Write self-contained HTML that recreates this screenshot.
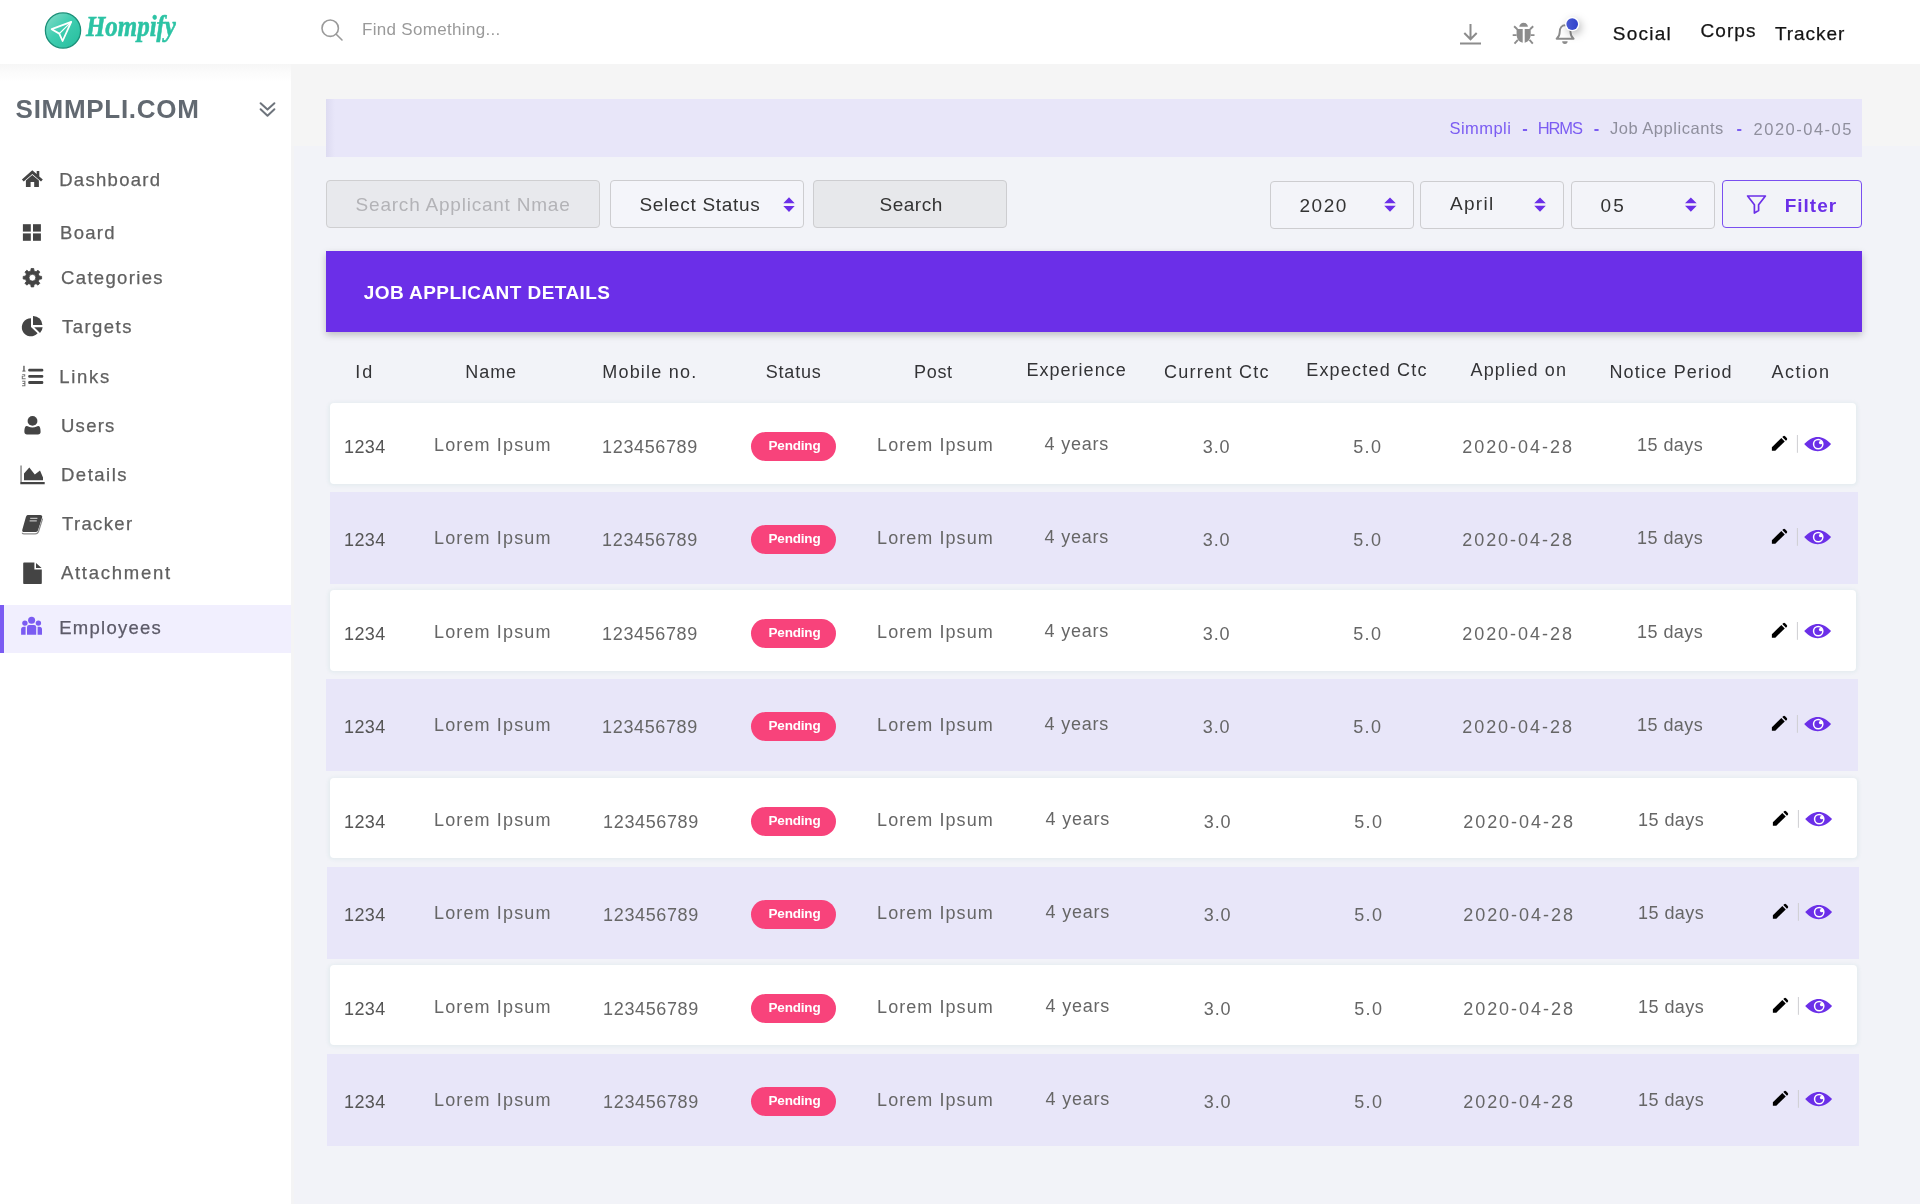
<!DOCTYPE html>
<html lang="en">
<head>
<meta charset="utf-8">
<title>Job Applicants - Simmpli HRMS</title>
<style>
html,body{margin:0;padding:0;}
body{width:1920px;height:1204px;overflow:hidden;position:relative;background:#f2f3f8;font-family:"Liberation Sans", sans-serif;}
.b{position:absolute;}
.tx{position:absolute;left:0;top:0;width:1920px;height:1204px;z-index:10;will-change:transform;pointer-events:none;}
.t{position:absolute;white-space:pre;}
svg.ic{position:absolute;left:0;top:0;width:1920px;height:1204px;z-index:9;pointer-events:none;}
</style>
</head>
<body>
<header>
<div class="b" style="left:0px;top:0px;width:1920px;height:64px;background:#ffffff;"></div>
<svg class="ic" viewBox="0 0 1920 1204">
<defs><linearGradient id="lg" x1="0" y1="0" x2="1" y2="1"><stop offset="0" stop-color="#8adcc9"/><stop offset="0.45" stop-color="#3fcdb0"/><stop offset="1" stop-color="#25bd9d"/></linearGradient></defs>
<circle cx="63" cy="30.5" r="17.6" fill="url(#lg)" stroke="#1b8f78" stroke-width="1.3"/>
<path d="M71.2 21.9 L51.7 29.2 L59.3 33.6 L62.6 41 Z" fill="none" stroke="#ffffff" stroke-width="1.8" stroke-linejoin="round"/>
<path d="M71.2 21.9 L59.3 33.6" fill="none" stroke="#ffffff" stroke-width="1.3"/>
<circle cx="330.2" cy="28.2" r="8.2" fill="none" stroke="#9a9a9a" stroke-width="1.6"/><path d="M336.2 34.3 L342 40" stroke="#9a9a9a" stroke-width="1.6" stroke-linecap="round"/>
<path d="M1470.5 24 V39 M1464.3 33 L1470.5 39.3 L1476.7 33 M1460 43.4 H1481" fill="none" stroke="#8c8c8c" stroke-width="2"/>
<g fill="#8c8c8c" stroke="#8c8c8c">
<path d="M1519.3 26.8 a4.3 4.1 0 0 1 8.6 0 z" stroke="none"/>
<path d="M1516.6 28.9 h6.1 v13.9 c-3.6 -0.6 -6.1 -4 -6.1 -8.2 z M1524.7 28.9 h6 v5.7 c0 4.2 -2.5 7.6 -6 8.2 z" stroke="none"/>
<path d="M1516.6 35.1 H1512.7 M1530.7 35.1 H1534.5 M1517.3 29.3 L1514.1 26.3 M1530.1 29.3 L1533.2 26.3 M1517.9 39.9 L1514.5 43.7 M1529.5 39.9 L1532.8 43.7" fill="none" stroke-width="1.9"/>
</g>
<path d="M1556.6 38.7 h17 c-2.3 -1.7 -3.1 -3.4 -3.1 -6.7 c0 -4 -2.2 -6.7 -5.4 -6.7 c-3.2 0 -5.4 2.7 -5.4 6.7 c0 3.3 -0.8 5 -3.1 6.7 z" fill="none" stroke="#8c8c8c" stroke-width="1.9" stroke-linejoin="round"/><path d="M1562.2 41.3 a2.7 2.7 0 0 0 5.4 0 z" fill="#8c8c8c"/>
<defs><linearGradient id="dg" x1="0" y1="0" x2="1" y2="0"><stop offset="0" stop-color="#4a5bd2"/><stop offset="1" stop-color="#3142cc"/></linearGradient></defs><circle cx="1572.2" cy="24.1" r="7.2" fill="#ffffff" style="filter:drop-shadow(2px 3px 4px rgba(0,0,0,0.28))"/><circle cx="1572.2" cy="24.1" r="5.85" fill="url(#dg)"/>
</svg>
<div class="tx">
<span class="t" style="left:86.3px;top:8.3px;font:italic 700 29.5px/36px 'Liberation Serif', serif;color:#2cc3a4;-webkit-text-stroke:0.6px #2cc3a4;transform:scaleX(0.844);transform-origin:0 0;">Hompify</span>
<span class="t" style="left:362.0px;top:18.6px;font:normal 400 17px/21px 'Liberation Sans', sans-serif;color:#9a9a9a;letter-spacing:0.31px;">Find Something...</span>
<span class="t" style="left:1612.8px;top:21.7px;font:normal 400 19px/23px 'Liberation Sans', sans-serif;color:#141414;letter-spacing:1.22px;-webkit-text-stroke:0.25px;">Social</span>
<span class="t" style="left:1700.6px;top:19.4px;font:normal 400 19px/23px 'Liberation Sans', sans-serif;color:#141414;letter-spacing:1.05px;-webkit-text-stroke:0.25px;">Corps</span>
<span class="t" style="left:1775.0px;top:21.9px;font:normal 400 19px/23px 'Liberation Sans', sans-serif;color:#141414;letter-spacing:0.94px;-webkit-text-stroke:0.25px;">Tracker</span>
</div>
</header>
<aside>
<div class="b" style="left:0px;top:64px;width:291px;height:1140px;background:#ffffff;"></div>
<div class="b" style="left:0px;top:64px;width:291px;height:18px;background:linear-gradient(#f6f6f6,#fbfbfb 45%,#ffffff);"></div>
<div class="b" style="left:0px;top:605px;width:291px;height:48px;background:#f1effe;border-left:4px solid #7b5cf2;box-sizing:border-box;"></div>
<svg class="ic" viewBox="0 0 1920 1204">
<path d="M260.6 103.2 L267.5 109.6 L274.4 103.2 M260.6 109.3 L267.5 115.7 L274.4 109.3" fill="none" stroke="#6e747c" stroke-width="2" stroke-linecap="round" stroke-linejoin="round"/>
<g fill="#444444"><path d="M21.9 179.4 L32.3 170.3 L36.7 174.1 V171 H39.3 V176.4 L42.8 179.4 L41.0 181.5 L32.3 174 L23.7 181.5 Z"/><path d="M25.9 180.5 L32.3 175.0 L38.9 180.5 V187.1 H34.2 V182 H30.6 V187.1 H25.9 Z"/></g>
<g fill="#444444"><rect x="22.9" y="224.2" width="7.9" height="7.4"/><rect x="33" y="224.2" width="7.9" height="7.4"/><rect x="22.9" y="233.4" width="7.9" height="7.4"/><rect x="33" y="233.4" width="7.9" height="7.4"/></g>
<path d="M31.09 268.49 L33.71 268.49 L34.03 270.89 L36.06 271.73 L37.98 270.26 L39.84 272.12 L38.37 274.04 L39.21 276.07 L41.61 276.39 L41.61 279.01 L39.21 279.33 L38.37 281.36 L39.84 283.28 L37.98 285.14 L36.06 283.67 L34.03 284.51 L33.71 286.91 L31.09 286.91 L30.77 284.51 L28.74 283.67 L26.82 285.14 L24.96 283.28 L26.43 281.36 L25.59 279.33 L23.19 279.01 L23.19 276.39 L25.59 276.07 L26.43 274.04 L24.96 272.12 L26.82 270.26 L28.74 271.73 L30.77 270.89 Z M29.00 277.70 a3.4 3.4 0 1 0 6.8 0 a3.4 3.4 0 1 0 -6.8 0 Z" fill="#444444" fill-rule="evenodd" stroke="#444444" stroke-width="0.8" stroke-linejoin="round"/>
<g fill="#444444"><path d="M31 318.3 V327 L37.6 333.2 A9 9 0 1 1 31 318.3 Z"/><path d="M33 316 A9.2 9.2 0 0 1 42.4 325 H33 Z"/><path d="M34.2 327.2 H42.6 A9.4 9.4 0 0 1 40 333 Z"/></g>
<g fill="#444444"><rect x="28.2" y="368.7" width="15.1" height="2.8" rx="1.2"/><rect x="28.2" y="374.9" width="15.1" height="2.8" rx="1.2"/><rect x="28.2" y="381.1" width="15.1" height="2.8" rx="1.2"/><rect x="23.2" y="365.8" width="1.5" height="5.4" opacity="0.8"/><rect x="22.2" y="370.6" width="3.4" height="1" opacity="0.7"/><path d="M22.2 374.2 h3 v2.4 h-2.4 v1.6 h2.8 v1 h-3.8 v-3.4 h2.4 v-0.8 h-2 z" opacity="0.75"/><path d="M22.2 380.8 h3.2 v5.4 h-3.4 v-1 h2.3 v-1.3 h-1.7 v-0.9 h1.7 v-1.2 h-2.1 z" opacity="0.75"/></g>
<g fill="#444444"><circle cx="32.5" cy="420.9" r="4.9"/><path d="M26.6 426 c1.6 0 2.6 1.6 5.9 1.6 s4.3 -1.6 5.9 -1.6 c1.8 0 2.2 3.4 2.2 6 c0 1.6 -1 2.5 -2.6 2.5 h-11 c-1.6 0 -2.6 -0.9 -2.6 -2.5 c0 -2.6 0.4 -6 2.2 -6 z"/></g>
<g fill="#444444"><path d="M20.3 465.5 h1.5 v16.6 h-1.5 z" fill="#8c8c8c"/><path d="M20.3 482.1 h24.4 v2.1 h-24.4 z"/><path d="M24 480.3 V473.6 L29.3 467.4 L34.8 474.6 L40 470.4 L43 477.5 V480.3 Z"/></g>
<g><path d="M27.6 514.9 h12.6 c1.6 0 2.4 1 1.9 2.6 l-4 12.4 c-0.4 1.3 -1.4 2.2 -3 2.2 h-11 c-1.5 0 -2.2 -1 -1.8 -2.4 l3.6 -12.6 c0.4 -1.4 1.2 -2.2 1.7 -2.2 z" fill="#444444"/><path d="M42.6 518.6 l-4 12.6 c-0.5 1.6 -1.7 2.6 -3.4 2.6 h-11.4 c-1 0 -1.6 -0.4 -1.6 -1" fill="none" stroke="#8a8a8a" stroke-width="1.2"/><path d="M30.2 518.4 h7.2 M29.6 520.8 h7.2" stroke="#bdbdbd" stroke-width="1.3"/></g>
<path d="M24 562.6 h10.4 v6.9 h7.4 v13.8 a0.8 0.8 0 0 1 -0.8 0.8 h-17 a0.8 0.8 0 0 1 -0.8 -0.8 v-19.9 a0.8 0.8 0 0 1 0.8 -0.8 z M36 562.9 l5.6 5.2 h-5.6 z" fill="#444444"/>
<g fill="#7b5cf2"><circle cx="31.6" cy="620.3" r="3.5"/><path d="M27 634.8 v-7.6 a2.2 2.2 0 0 1 2.2 -2.2 h4.8 a2.2 2.2 0 0 1 2.2 2.2 v7.6 z"/><circle cx="24.9" cy="623.1" r="2.7"/><path d="M21.1 634.8 v-5.4 a2.7 2.7 0 0 1 2.7 -2.7 h1.8 v8.1 z"/><circle cx="38.4" cy="623.1" r="2.7"/><path d="M42 634.8 v-5.4 a2.7 2.7 0 0 0 -2.7 -2.7 h-1.7 v8.1 z"/></g>
</svg>
<div class="tx">
<span class="t" style="left:15.6px;top:93.3px;font:normal 700 26px/32px 'Liberation Sans', sans-serif;color:#626971;letter-spacing:0.7px;">SIMMPLI.COM</span>
<span class="t" style="left:59.2px;top:167.9px;font:normal 400 18.5px/23px 'Liberation Sans', sans-serif;color:#606060;letter-spacing:1.3px;-webkit-text-stroke:0.25px;">Dashboard</span>
<span class="t" style="left:60.1px;top:220.8px;font:normal 400 18.5px/23px 'Liberation Sans', sans-serif;color:#606060;letter-spacing:1.28px;-webkit-text-stroke:0.25px;">Board</span>
<span class="t" style="left:61.1px;top:265.7px;font:normal 400 18.5px/23px 'Liberation Sans', sans-serif;color:#606060;letter-spacing:1.33px;-webkit-text-stroke:0.25px;">Categories</span>
<span class="t" style="left:62.0px;top:314.9px;font:normal 400 18.5px/23px 'Liberation Sans', sans-serif;color:#606060;letter-spacing:1.46px;-webkit-text-stroke:0.25px;">Targets</span>
<span class="t" style="left:59.2px;top:364.9px;font:normal 400 18.5px/23px 'Liberation Sans', sans-serif;color:#606060;letter-spacing:1.69px;-webkit-text-stroke:0.25px;">Links</span>
<span class="t" style="left:61.0px;top:413.7px;font:normal 400 18.5px/23px 'Liberation Sans', sans-serif;color:#606060;letter-spacing:1.26px;-webkit-text-stroke:0.25px;">Users</span>
<span class="t" style="left:61.0px;top:463.1px;font:normal 400 18.5px/23px 'Liberation Sans', sans-serif;color:#606060;letter-spacing:1.49px;-webkit-text-stroke:0.25px;">Details</span>
<span class="t" style="left:62.0px;top:512.0px;font:normal 400 18.5px/23px 'Liberation Sans', sans-serif;color:#606060;letter-spacing:1.34px;-webkit-text-stroke:0.25px;">Tracker</span>
<span class="t" style="left:60.9px;top:561.0px;font:normal 400 18.5px/23px 'Liberation Sans', sans-serif;color:#606060;letter-spacing:1.74px;-webkit-text-stroke:0.25px;">Attachment</span>
<span class="t" style="left:59.2px;top:615.7px;font:normal 400 18.5px/23px 'Liberation Sans', sans-serif;color:#5c5a68;letter-spacing:1.27px;-webkit-text-stroke:0.25px;">Employees</span>
</div>
</aside>
<main>
<div class="b" style="left:291px;top:64px;width:1629px;height:82px;background:#f5f5f5;"></div>
<div class="b" style="left:291px;top:146px;width:3px;height:1058px;background:#f4f4f5;"></div>
<div class="b" style="left:326px;top:99px;width:1536px;height:58px;background:linear-gradient(90deg,#dddbf1 0,#e8e6f9 9px);"></div>
<div class="b" style="left:326px;top:180px;width:274px;height:47.5px;background:#e8e9ed;border:1px solid #cfcfd1;border-radius:4px;box-sizing:border-box;"></div>
<div class="b" style="left:610px;top:180px;width:194px;height:47.5px;background:#f4f5fa;border:1px solid #cdcdd0;border-radius:4px;box-sizing:border-box;"></div>
<div class="b" style="left:813px;top:180px;width:194px;height:47.5px;background:#e7e8eb;border:1px solid #cdcdd0;border-radius:4px;box-sizing:border-box;"></div>
<div class="b" style="left:1270px;top:181px;width:144px;height:48px;background:#f3f4f9;border:1px solid #cdcdd0;border-radius:4px;box-sizing:border-box;"></div>
<div class="b" style="left:1420px;top:181px;width:144px;height:48px;background:#f3f4f9;border:1px solid #cdcdd0;border-radius:4px;box-sizing:border-box;"></div>
<div class="b" style="left:1571px;top:181px;width:144px;height:48px;background:#f3f4f9;border:1px solid #cdcdd0;border-radius:4px;box-sizing:border-box;"></div>
<div class="b" style="left:1722px;top:180px;width:140px;height:48px;border:1px solid #7a4ff0;border-radius:4px;box-sizing:border-box;"></div>
<div class="b" style="left:326px;top:251px;width:1536px;height:81px;background:#6b2fe8;box-shadow:0 3px 7px rgba(0,0,0,0.22);"></div>
<div class="b" style="left:329.7px;top:403px;width:1526.1px;height:80.8px;background:#ffffff;border-radius:4px;box-shadow:0 0.5px 3px 1.5px rgba(214,228,230,0.42);"></div>
<div class="b" style="left:330px;top:492px;width:1528px;height:92px;background:#e8e6f9;"></div>
<div class="b" style="left:329.7px;top:590px;width:1526.1px;height:80.8px;background:#ffffff;border-radius:4px;box-shadow:0 0.5px 3px 1.5px rgba(214,228,230,0.42);"></div>
<div class="b" style="left:326px;top:679px;width:1532px;height:91.5px;background:#e8e6f9;"></div>
<div class="b" style="left:330.4px;top:777.8px;width:1526.4px;height:80.2px;background:#ffffff;border-radius:4px;box-shadow:0 0.5px 3px 1.5px rgba(214,228,230,0.42);"></div>
<div class="b" style="left:327px;top:867px;width:1532px;height:92px;background:#e8e6f9;"></div>
<div class="b" style="left:330.4px;top:965.3px;width:1526.4px;height:79.9px;background:#ffffff;border-radius:4px;box-shadow:0 0.5px 3px 1.5px rgba(214,228,230,0.42);"></div>
<div class="b" style="left:327px;top:1054px;width:1532px;height:92px;background:#e8e6f9;"></div>
<div class="b" style="left:751.25px;top:432.4px;width:84.65px;height:28.5px;background:#f8437b;border-radius:14.5px;"></div>
<div class="b" style="left:751.25px;top:525.4px;width:84.65px;height:28.5px;background:#f8437b;border-radius:14.5px;"></div>
<div class="b" style="left:751.25px;top:619.4px;width:84.65px;height:28.5px;background:#f8437b;border-radius:14.5px;"></div>
<div class="b" style="left:751.25px;top:712.4px;width:84.65px;height:28.5px;background:#f8437b;border-radius:14.5px;"></div>
<div class="b" style="left:751.25px;top:807.4px;width:84.65px;height:28.5px;background:#f8437b;border-radius:14.5px;"></div>
<div class="b" style="left:751.25px;top:900.4px;width:84.65px;height:28.5px;background:#f8437b;border-radius:14.5px;"></div>
<div class="b" style="left:751.25px;top:994.4px;width:84.65px;height:28.5px;background:#f8437b;border-radius:14.5px;"></div>
<div class="b" style="left:751.25px;top:1087.4px;width:84.65px;height:28.5px;background:#f8437b;border-radius:14.5px;"></div>
<svg class="ic" viewBox="0 0 1920 1204">
<path d="M783.3 203.3 L789.0 197.3 L794.7 203.3 Z M783.3 206 L789.0 212 L794.7 206 Z" fill="#6b2fe8"/>
<path d="M1384.2 203.3 L1390.0 197.5 L1395.8 203.3 Z M1384.2 205.8 L1390.0 211.7 L1395.8 205.8 Z" fill="#6b2fe8"/>
<path d="M1534.2 203.3 L1540.0 197.5 L1545.8 203.3 Z M1534.2 205.8 L1540.0 211.7 L1545.8 205.8 Z" fill="#6b2fe8"/>
<path d="M1685 203.3 L1690.85 197.5 L1696.7 203.3 Z M1685 205.8 L1690.85 211.7 L1696.7 205.8 Z" fill="#6b2fe8"/>
<path d="M1747.6 196 H1765.4 L1758.6 204.8 V210.6 L1754.4 213 V204.8 Z" fill="none" stroke="#6b2fe8" stroke-width="1.7" stroke-linejoin="round"/>
<g transform="translate(0,0)"><path d="M1771.9 447.3 L1781.35 438.0 L1784.75 441.4 L1775.3 450.75 H1771.9 Z" fill="#000"/><path d="M1782.3 437.1 L1783.1 436.3 a1.45 1.45 0 0 1 2.05 0 l1.6 1.6 a1.45 1.45 0 0 1 0 2.05 l-0.8 0.8 Z" fill="#000"/></g>
<rect x="1796.9" y="435" width="1" height="17.8" fill="#cfcfd2"/>
<g><path d="M1804.2 444.1 C1808.7 438.90000000000003 1813.2 436.90000000000003 1817.7 436.90000000000003 C1822.2 436.90000000000003 1826.7 438.90000000000003 1831.1000000000001 444.1 C1826.7 449.3 1822.2 451.20000000000005 1817.7 451.20000000000005 C1813.2 451.20000000000005 1808.7 449.3 1804.2 444.1 Z" fill="#6b2fe8"/><circle cx="1818.2" cy="444.1" r="5.4" fill="#fff"/><circle cx="1818.2" cy="444.1" r="3.9" fill="#6b2fe8"/><circle cx="1820.8" cy="442.5" r="1.85" fill="#fff"/></g>
<g transform="translate(0,93)"><path d="M1771.9 447.3 L1781.35 438.0 L1784.75 441.4 L1775.3 450.75 H1771.9 Z" fill="#000"/><path d="M1782.3 437.1 L1783.1 436.3 a1.45 1.45 0 0 1 2.05 0 l1.6 1.6 a1.45 1.45 0 0 1 0 2.05 l-0.8 0.8 Z" fill="#000"/></g>
<rect x="1796.9" y="528" width="1" height="17.8" fill="#cfcfd2"/>
<g><path d="M1804.2 537.1 C1808.7 531.9 1813.2 529.9 1817.7 529.9 C1822.2 529.9 1826.7 531.9 1831.1000000000001 537.1 C1826.7 542.3000000000001 1822.2 544.2 1817.7 544.2 C1813.2 544.2 1808.7 542.3000000000001 1804.2 537.1 Z" fill="#6b2fe8"/><circle cx="1818.2" cy="537.1" r="5.4" fill="#fff"/><circle cx="1818.2" cy="537.1" r="3.9" fill="#6b2fe8"/><circle cx="1820.8" cy="535.5" r="1.85" fill="#fff"/></g>
<g transform="translate(0,187)"><path d="M1771.9 447.3 L1781.35 438.0 L1784.75 441.4 L1775.3 450.75 H1771.9 Z" fill="#000"/><path d="M1782.3 437.1 L1783.1 436.3 a1.45 1.45 0 0 1 2.05 0 l1.6 1.6 a1.45 1.45 0 0 1 0 2.05 l-0.8 0.8 Z" fill="#000"/></g>
<rect x="1796.9" y="622" width="1" height="17.8" fill="#cfcfd2"/>
<g><path d="M1804.2 631.1 C1808.7 625.9 1813.2 623.9 1817.7 623.9 C1822.2 623.9 1826.7 625.9 1831.1000000000001 631.1 C1826.7 636.3000000000001 1822.2 638.2 1817.7 638.2 C1813.2 638.2 1808.7 636.3000000000001 1804.2 631.1 Z" fill="#6b2fe8"/><circle cx="1818.2" cy="631.1" r="5.4" fill="#fff"/><circle cx="1818.2" cy="631.1" r="3.9" fill="#6b2fe8"/><circle cx="1820.8" cy="629.5" r="1.85" fill="#fff"/></g>
<g transform="translate(0,280)"><path d="M1771.9 447.3 L1781.35 438.0 L1784.75 441.4 L1775.3 450.75 H1771.9 Z" fill="#000"/><path d="M1782.3 437.1 L1783.1 436.3 a1.45 1.45 0 0 1 2.05 0 l1.6 1.6 a1.45 1.45 0 0 1 0 2.05 l-0.8 0.8 Z" fill="#000"/></g>
<rect x="1796.9" y="715" width="1" height="17.8" fill="#cfcfd2"/>
<g><path d="M1804.2 724.1 C1808.7 718.9 1813.2 716.9 1817.7 716.9 C1822.2 716.9 1826.7 718.9 1831.1000000000001 724.1 C1826.7 729.3000000000001 1822.2 731.2 1817.7 731.2 C1813.2 731.2 1808.7 729.3000000000001 1804.2 724.1 Z" fill="#6b2fe8"/><circle cx="1818.2" cy="724.1" r="5.4" fill="#fff"/><circle cx="1818.2" cy="724.1" r="3.9" fill="#6b2fe8"/><circle cx="1820.8" cy="722.5" r="1.85" fill="#fff"/></g>
<g transform="translate(1,375)"><path d="M1771.9 447.3 L1781.35 438.0 L1784.75 441.4 L1775.3 450.75 H1771.9 Z" fill="#000"/><path d="M1782.3 437.1 L1783.1 436.3 a1.45 1.45 0 0 1 2.05 0 l1.6 1.6 a1.45 1.45 0 0 1 0 2.05 l-0.8 0.8 Z" fill="#000"/></g>
<rect x="1797.9" y="810" width="1" height="17.8" fill="#cfcfd2"/>
<g><path d="M1805.2 819.1 C1809.7 813.9 1814.2 811.9 1818.7 811.9 C1823.2 811.9 1827.7 813.9 1832.1000000000001 819.1 C1827.7 824.3000000000001 1823.2 826.2 1818.7 826.2 C1814.2 826.2 1809.7 824.3000000000001 1805.2 819.1 Z" fill="#6b2fe8"/><circle cx="1819.2" cy="819.1" r="5.4" fill="#fff"/><circle cx="1819.2" cy="819.1" r="3.9" fill="#6b2fe8"/><circle cx="1821.8" cy="817.5" r="1.85" fill="#fff"/></g>
<g transform="translate(1,468)"><path d="M1771.9 447.3 L1781.35 438.0 L1784.75 441.4 L1775.3 450.75 H1771.9 Z" fill="#000"/><path d="M1782.3 437.1 L1783.1 436.3 a1.45 1.45 0 0 1 2.05 0 l1.6 1.6 a1.45 1.45 0 0 1 0 2.05 l-0.8 0.8 Z" fill="#000"/></g>
<rect x="1797.9" y="903" width="1" height="17.8" fill="#cfcfd2"/>
<g><path d="M1805.2 912.1 C1809.7 906.9 1814.2 904.9 1818.7 904.9 C1823.2 904.9 1827.7 906.9 1832.1000000000001 912.1 C1827.7 917.3000000000001 1823.2 919.2 1818.7 919.2 C1814.2 919.2 1809.7 917.3000000000001 1805.2 912.1 Z" fill="#6b2fe8"/><circle cx="1819.2" cy="912.1" r="5.4" fill="#fff"/><circle cx="1819.2" cy="912.1" r="3.9" fill="#6b2fe8"/><circle cx="1821.8" cy="910.5" r="1.85" fill="#fff"/></g>
<g transform="translate(1,562)"><path d="M1771.9 447.3 L1781.35 438.0 L1784.75 441.4 L1775.3 450.75 H1771.9 Z" fill="#000"/><path d="M1782.3 437.1 L1783.1 436.3 a1.45 1.45 0 0 1 2.05 0 l1.6 1.6 a1.45 1.45 0 0 1 0 2.05 l-0.8 0.8 Z" fill="#000"/></g>
<rect x="1797.9" y="997" width="1" height="17.8" fill="#cfcfd2"/>
<g><path d="M1805.2 1006.1 C1809.7 1000.9 1814.2 998.9 1818.7 998.9 C1823.2 998.9 1827.7 1000.9 1832.1000000000001 1006.1 C1827.7 1011.3000000000001 1823.2 1013.2 1818.7 1013.2 C1814.2 1013.2 1809.7 1011.3000000000001 1805.2 1006.1 Z" fill="#6b2fe8"/><circle cx="1819.2" cy="1006.1" r="5.4" fill="#fff"/><circle cx="1819.2" cy="1006.1" r="3.9" fill="#6b2fe8"/><circle cx="1821.8" cy="1004.5" r="1.85" fill="#fff"/></g>
<g transform="translate(1,655)"><path d="M1771.9 447.3 L1781.35 438.0 L1784.75 441.4 L1775.3 450.75 H1771.9 Z" fill="#000"/><path d="M1782.3 437.1 L1783.1 436.3 a1.45 1.45 0 0 1 2.05 0 l1.6 1.6 a1.45 1.45 0 0 1 0 2.05 l-0.8 0.8 Z" fill="#000"/></g>
<rect x="1797.9" y="1090" width="1" height="17.8" fill="#cfcfd2"/>
<g><path d="M1805.2 1099.1 C1809.7 1093.8999999999999 1814.2 1091.8999999999999 1818.7 1091.8999999999999 C1823.2 1091.8999999999999 1827.7 1093.8999999999999 1832.1000000000001 1099.1 C1827.7 1104.3 1823.2 1106.1999999999998 1818.7 1106.1999999999998 C1814.2 1106.1999999999998 1809.7 1104.3 1805.2 1099.1 Z" fill="#6b2fe8"/><circle cx="1819.2" cy="1099.1" r="5.4" fill="#fff"/><circle cx="1819.2" cy="1099.1" r="3.9" fill="#6b2fe8"/><circle cx="1821.8" cy="1097.5" r="1.85" fill="#fff"/></g>
</svg>
<div class="tx">
<span class="t" style="left:1449.5px;top:117.5px;font:normal 400 16.5px/20px 'Liberation Sans', sans-serif;color:#7b5cf2;letter-spacing:0.45px;">Simmpli</span>
<span class="t" style="left:1522.3px;top:117.5px;font:normal 700 16.5px/20px 'Liberation Sans', sans-serif;color:#7b5cf2;">-</span>
<span class="t" style="left:1537.8px;top:117.5px;font:normal 400 16.5px/20px 'Liberation Sans', sans-serif;color:#7b5cf2;letter-spacing:-1.13px;">HRMS</span>
<span class="t" style="left:1593.8px;top:117.5px;font:normal 700 16.5px/20px 'Liberation Sans', sans-serif;color:#7b5cf2;">-</span>
<span class="t" style="left:1609.9px;top:117.5px;font:normal 400 16.5px/20px 'Liberation Sans', sans-serif;color:#8f8f9d;letter-spacing:0.54px;">Job Applicants</span>
<span class="t" style="left:1736.6px;top:117.5px;font:normal 700 16.5px/20px 'Liberation Sans', sans-serif;color:#7b5cf2;">-</span>
<span class="t" style="left:1753.6px;top:118.7px;font:normal 400 16.5px/20px 'Liberation Sans', sans-serif;color:#8f8f9d;letter-spacing:1.49px;">2020-04-05</span>
<span class="t" style="left:355.6px;top:192.8px;font:normal 400 19px/23px 'Liberation Sans', sans-serif;color:#b3b3b7;letter-spacing:0.78px;">Search Applicant Nmae</span>
<span class="t" style="left:639.4px;top:192.8px;font:normal 400 19px/23px 'Liberation Sans', sans-serif;color:#333333;letter-spacing:0.7px;">Select Status</span>
<span class="t" style="left:879.6px;top:192.8px;font:normal 400 19px/23px 'Liberation Sans', sans-serif;color:#333333;letter-spacing:0.49px;">Search</span>
<span class="t" style="left:1299.5px;top:193.9px;font:normal 400 19px/23px 'Liberation Sans', sans-serif;color:#333333;letter-spacing:1.53px;">2020</span>
<span class="t" style="left:1450.0px;top:192.2px;font:normal 400 19px/23px 'Liberation Sans', sans-serif;color:#333333;letter-spacing:1.3px;">April</span>
<span class="t" style="left:1600.5px;top:193.9px;font:normal 400 19px/23px 'Liberation Sans', sans-serif;color:#333333;letter-spacing:2.23px;">05</span>
<span class="t" style="left:1784.8px;top:193.9px;font:normal 700 19px/23px 'Liberation Sans', sans-serif;color:#6b2fe8;letter-spacing:0.97px;">Filter</span>
<span class="t" style="left:363.7px;top:281.1px;font:normal 700 19px/23px 'Liberation Sans', sans-serif;color:#ffffff;letter-spacing:0.44px;">JOB APPLICANT DETAILS</span>
<span class="t" style="left:355.2px;top:361.1px;font:normal 400 18px/22px 'Liberation Sans', sans-serif;color:#333336;letter-spacing:2.1px;">Id</span>
<span class="t" style="left:465.3px;top:361.1px;font:normal 400 18px/22px 'Liberation Sans', sans-serif;color:#333336;letter-spacing:0.93px;">Name</span>
<span class="t" style="left:602.2px;top:361.1px;font:normal 400 18px/22px 'Liberation Sans', sans-serif;color:#333336;letter-spacing:1.22px;">Mobile no.</span>
<span class="t" style="left:765.7px;top:360.9px;font:normal 400 18px/22px 'Liberation Sans', sans-serif;color:#333336;letter-spacing:0.83px;">Status</span>
<span class="t" style="left:914.1px;top:360.9px;font:normal 400 18px/22px 'Liberation Sans', sans-serif;color:#333336;letter-spacing:0.66px;">Post</span>
<span class="t" style="left:1026.6px;top:358.8px;font:normal 400 18px/22px 'Liberation Sans', sans-serif;color:#333336;letter-spacing:1.0px;">Experience</span>
<span class="t" style="left:1164.0px;top:360.6px;font:normal 400 18px/22px 'Liberation Sans', sans-serif;color:#333336;letter-spacing:1.25px;">Current Ctc</span>
<span class="t" style="left:1306.2px;top:358.6px;font:normal 400 18px/22px 'Liberation Sans', sans-serif;color:#333336;letter-spacing:1.2px;">Expected Ctc</span>
<span class="t" style="left:1470.5px;top:358.6px;font:normal 400 18px/22px 'Liberation Sans', sans-serif;color:#333336;letter-spacing:1.16px;">Applied on</span>
<span class="t" style="left:1609.4px;top:360.6px;font:normal 400 18px/22px 'Liberation Sans', sans-serif;color:#333336;letter-spacing:1.18px;">Notice Period</span>
<span class="t" style="left:1771.4px;top:360.6px;font:normal 400 18px/22px 'Liberation Sans', sans-serif;color:#333336;letter-spacing:1.5px;">Action</span>
<span class="t" style="left:344.0px;top:435.5px;font:normal 400 18px/22px 'Liberation Sans', sans-serif;color:#555555;letter-spacing:0.41px;">1234</span>
<span class="t" style="left:434.0px;top:433.8px;font:normal 400 18px/22px 'Liberation Sans', sans-serif;color:#666666;letter-spacing:1.14px;">Lorem Ipsum</span>
<span class="t" style="left:602.1px;top:435.5px;font:normal 400 18px/22px 'Liberation Sans', sans-serif;color:#666666;letter-spacing:0.63px;">123456789</span>
<span class="t" style="left:877.1px;top:433.8px;font:normal 400 18px/22px 'Liberation Sans', sans-serif;color:#666666;letter-spacing:1.06px;">Lorem Ipsum</span>
<span class="t" style="left:1044.6px;top:432.8px;font:normal 400 18px/22px 'Liberation Sans', sans-serif;color:#666666;letter-spacing:0.78px;">4 years</span>
<span class="t" style="left:1202.8px;top:435.6px;font:normal 400 18px/22px 'Liberation Sans', sans-serif;color:#666666;letter-spacing:0.84px;">3.0</span>
<span class="t" style="left:1353.2px;top:435.6px;font:normal 400 18px/22px 'Liberation Sans', sans-serif;color:#666666;letter-spacing:1.34px;">5.0</span>
<span class="t" style="left:1462.2px;top:435.6px;font:normal 400 18px/22px 'Liberation Sans', sans-serif;color:#666666;letter-spacing:1.96px;">2020-04-28</span>
<span class="t" style="left:1637.1px;top:433.8px;font:normal 400 18px/22px 'Liberation Sans', sans-serif;color:#666666;letter-spacing:0.43px;">15 days</span>
<span class="t" style="left:768.5px;top:437.1px;font:normal 700 13.5px/17px 'Liberation Sans', sans-serif;color:#ffffff;letter-spacing:-0.18px;">Pending</span>
<span class="t" style="left:344.0px;top:528.5px;font:normal 400 18px/22px 'Liberation Sans', sans-serif;color:#555555;letter-spacing:0.41px;">1234</span>
<span class="t" style="left:434.0px;top:526.8px;font:normal 400 18px/22px 'Liberation Sans', sans-serif;color:#666666;letter-spacing:1.14px;">Lorem Ipsum</span>
<span class="t" style="left:602.1px;top:528.5px;font:normal 400 18px/22px 'Liberation Sans', sans-serif;color:#666666;letter-spacing:0.63px;">123456789</span>
<span class="t" style="left:877.1px;top:526.8px;font:normal 400 18px/22px 'Liberation Sans', sans-serif;color:#666666;letter-spacing:1.06px;">Lorem Ipsum</span>
<span class="t" style="left:1044.6px;top:525.8px;font:normal 400 18px/22px 'Liberation Sans', sans-serif;color:#666666;letter-spacing:0.78px;">4 years</span>
<span class="t" style="left:1202.8px;top:528.6px;font:normal 400 18px/22px 'Liberation Sans', sans-serif;color:#666666;letter-spacing:0.84px;">3.0</span>
<span class="t" style="left:1353.2px;top:528.6px;font:normal 400 18px/22px 'Liberation Sans', sans-serif;color:#666666;letter-spacing:1.34px;">5.0</span>
<span class="t" style="left:1462.2px;top:528.6px;font:normal 400 18px/22px 'Liberation Sans', sans-serif;color:#666666;letter-spacing:1.96px;">2020-04-28</span>
<span class="t" style="left:1637.1px;top:526.8px;font:normal 400 18px/22px 'Liberation Sans', sans-serif;color:#666666;letter-spacing:0.43px;">15 days</span>
<span class="t" style="left:768.5px;top:530.1px;font:normal 700 13.5px/17px 'Liberation Sans', sans-serif;color:#ffffff;letter-spacing:-0.18px;">Pending</span>
<span class="t" style="left:344.0px;top:622.5px;font:normal 400 18px/22px 'Liberation Sans', sans-serif;color:#555555;letter-spacing:0.41px;">1234</span>
<span class="t" style="left:434.0px;top:620.8px;font:normal 400 18px/22px 'Liberation Sans', sans-serif;color:#666666;letter-spacing:1.14px;">Lorem Ipsum</span>
<span class="t" style="left:602.1px;top:622.5px;font:normal 400 18px/22px 'Liberation Sans', sans-serif;color:#666666;letter-spacing:0.63px;">123456789</span>
<span class="t" style="left:877.1px;top:620.8px;font:normal 400 18px/22px 'Liberation Sans', sans-serif;color:#666666;letter-spacing:1.06px;">Lorem Ipsum</span>
<span class="t" style="left:1044.6px;top:619.8px;font:normal 400 18px/22px 'Liberation Sans', sans-serif;color:#666666;letter-spacing:0.78px;">4 years</span>
<span class="t" style="left:1202.8px;top:622.6px;font:normal 400 18px/22px 'Liberation Sans', sans-serif;color:#666666;letter-spacing:0.84px;">3.0</span>
<span class="t" style="left:1353.2px;top:622.6px;font:normal 400 18px/22px 'Liberation Sans', sans-serif;color:#666666;letter-spacing:1.34px;">5.0</span>
<span class="t" style="left:1462.2px;top:622.6px;font:normal 400 18px/22px 'Liberation Sans', sans-serif;color:#666666;letter-spacing:1.96px;">2020-04-28</span>
<span class="t" style="left:1637.1px;top:620.8px;font:normal 400 18px/22px 'Liberation Sans', sans-serif;color:#666666;letter-spacing:0.43px;">15 days</span>
<span class="t" style="left:768.5px;top:624.1px;font:normal 700 13.5px/17px 'Liberation Sans', sans-serif;color:#ffffff;letter-spacing:-0.18px;">Pending</span>
<span class="t" style="left:344.0px;top:715.5px;font:normal 400 18px/22px 'Liberation Sans', sans-serif;color:#555555;letter-spacing:0.41px;">1234</span>
<span class="t" style="left:434.0px;top:713.8px;font:normal 400 18px/22px 'Liberation Sans', sans-serif;color:#666666;letter-spacing:1.14px;">Lorem Ipsum</span>
<span class="t" style="left:602.1px;top:715.5px;font:normal 400 18px/22px 'Liberation Sans', sans-serif;color:#666666;letter-spacing:0.63px;">123456789</span>
<span class="t" style="left:877.1px;top:713.8px;font:normal 400 18px/22px 'Liberation Sans', sans-serif;color:#666666;letter-spacing:1.06px;">Lorem Ipsum</span>
<span class="t" style="left:1044.6px;top:712.8px;font:normal 400 18px/22px 'Liberation Sans', sans-serif;color:#666666;letter-spacing:0.78px;">4 years</span>
<span class="t" style="left:1202.8px;top:715.6px;font:normal 400 18px/22px 'Liberation Sans', sans-serif;color:#666666;letter-spacing:0.84px;">3.0</span>
<span class="t" style="left:1353.2px;top:715.6px;font:normal 400 18px/22px 'Liberation Sans', sans-serif;color:#666666;letter-spacing:1.34px;">5.0</span>
<span class="t" style="left:1462.2px;top:715.6px;font:normal 400 18px/22px 'Liberation Sans', sans-serif;color:#666666;letter-spacing:1.96px;">2020-04-28</span>
<span class="t" style="left:1637.1px;top:713.8px;font:normal 400 18px/22px 'Liberation Sans', sans-serif;color:#666666;letter-spacing:0.43px;">15 days</span>
<span class="t" style="left:768.5px;top:717.1px;font:normal 700 13.5px/17px 'Liberation Sans', sans-serif;color:#ffffff;letter-spacing:-0.18px;">Pending</span>
<span class="t" style="left:344.0px;top:810.5px;font:normal 400 18px/22px 'Liberation Sans', sans-serif;color:#555555;letter-spacing:0.41px;">1234</span>
<span class="t" style="left:434.0px;top:808.8px;font:normal 400 18px/22px 'Liberation Sans', sans-serif;color:#666666;letter-spacing:1.14px;">Lorem Ipsum</span>
<span class="t" style="left:603.1px;top:810.5px;font:normal 400 18px/22px 'Liberation Sans', sans-serif;color:#666666;letter-spacing:0.63px;">123456789</span>
<span class="t" style="left:877.1px;top:808.8px;font:normal 400 18px/22px 'Liberation Sans', sans-serif;color:#666666;letter-spacing:1.06px;">Lorem Ipsum</span>
<span class="t" style="left:1045.6px;top:807.8px;font:normal 400 18px/22px 'Liberation Sans', sans-serif;color:#666666;letter-spacing:0.78px;">4 years</span>
<span class="t" style="left:1203.8px;top:810.6px;font:normal 400 18px/22px 'Liberation Sans', sans-serif;color:#666666;letter-spacing:0.84px;">3.0</span>
<span class="t" style="left:1354.2px;top:810.6px;font:normal 400 18px/22px 'Liberation Sans', sans-serif;color:#666666;letter-spacing:1.34px;">5.0</span>
<span class="t" style="left:1463.2px;top:810.6px;font:normal 400 18px/22px 'Liberation Sans', sans-serif;color:#666666;letter-spacing:1.96px;">2020-04-28</span>
<span class="t" style="left:1638.1px;top:808.8px;font:normal 400 18px/22px 'Liberation Sans', sans-serif;color:#666666;letter-spacing:0.43px;">15 days</span>
<span class="t" style="left:768.5px;top:812.1px;font:normal 700 13.5px/17px 'Liberation Sans', sans-serif;color:#ffffff;letter-spacing:-0.18px;">Pending</span>
<span class="t" style="left:344.0px;top:903.5px;font:normal 400 18px/22px 'Liberation Sans', sans-serif;color:#555555;letter-spacing:0.41px;">1234</span>
<span class="t" style="left:434.0px;top:901.8px;font:normal 400 18px/22px 'Liberation Sans', sans-serif;color:#666666;letter-spacing:1.14px;">Lorem Ipsum</span>
<span class="t" style="left:603.1px;top:903.5px;font:normal 400 18px/22px 'Liberation Sans', sans-serif;color:#666666;letter-spacing:0.63px;">123456789</span>
<span class="t" style="left:877.1px;top:901.8px;font:normal 400 18px/22px 'Liberation Sans', sans-serif;color:#666666;letter-spacing:1.06px;">Lorem Ipsum</span>
<span class="t" style="left:1045.6px;top:900.8px;font:normal 400 18px/22px 'Liberation Sans', sans-serif;color:#666666;letter-spacing:0.78px;">4 years</span>
<span class="t" style="left:1203.8px;top:903.6px;font:normal 400 18px/22px 'Liberation Sans', sans-serif;color:#666666;letter-spacing:0.84px;">3.0</span>
<span class="t" style="left:1354.2px;top:903.6px;font:normal 400 18px/22px 'Liberation Sans', sans-serif;color:#666666;letter-spacing:1.34px;">5.0</span>
<span class="t" style="left:1463.2px;top:903.6px;font:normal 400 18px/22px 'Liberation Sans', sans-serif;color:#666666;letter-spacing:1.96px;">2020-04-28</span>
<span class="t" style="left:1638.1px;top:901.8px;font:normal 400 18px/22px 'Liberation Sans', sans-serif;color:#666666;letter-spacing:0.43px;">15 days</span>
<span class="t" style="left:768.5px;top:905.1px;font:normal 700 13.5px/17px 'Liberation Sans', sans-serif;color:#ffffff;letter-spacing:-0.18px;">Pending</span>
<span class="t" style="left:344.0px;top:997.5px;font:normal 400 18px/22px 'Liberation Sans', sans-serif;color:#555555;letter-spacing:0.41px;">1234</span>
<span class="t" style="left:434.0px;top:995.8px;font:normal 400 18px/22px 'Liberation Sans', sans-serif;color:#666666;letter-spacing:1.14px;">Lorem Ipsum</span>
<span class="t" style="left:603.1px;top:997.5px;font:normal 400 18px/22px 'Liberation Sans', sans-serif;color:#666666;letter-spacing:0.63px;">123456789</span>
<span class="t" style="left:877.1px;top:995.8px;font:normal 400 18px/22px 'Liberation Sans', sans-serif;color:#666666;letter-spacing:1.06px;">Lorem Ipsum</span>
<span class="t" style="left:1045.6px;top:994.8px;font:normal 400 18px/22px 'Liberation Sans', sans-serif;color:#666666;letter-spacing:0.78px;">4 years</span>
<span class="t" style="left:1203.8px;top:997.6px;font:normal 400 18px/22px 'Liberation Sans', sans-serif;color:#666666;letter-spacing:0.84px;">3.0</span>
<span class="t" style="left:1354.2px;top:997.6px;font:normal 400 18px/22px 'Liberation Sans', sans-serif;color:#666666;letter-spacing:1.34px;">5.0</span>
<span class="t" style="left:1463.2px;top:997.6px;font:normal 400 18px/22px 'Liberation Sans', sans-serif;color:#666666;letter-spacing:1.96px;">2020-04-28</span>
<span class="t" style="left:1638.1px;top:995.8px;font:normal 400 18px/22px 'Liberation Sans', sans-serif;color:#666666;letter-spacing:0.43px;">15 days</span>
<span class="t" style="left:768.5px;top:999.1px;font:normal 700 13.5px/17px 'Liberation Sans', sans-serif;color:#ffffff;letter-spacing:-0.18px;">Pending</span>
<span class="t" style="left:344.0px;top:1090.5px;font:normal 400 18px/22px 'Liberation Sans', sans-serif;color:#555555;letter-spacing:0.41px;">1234</span>
<span class="t" style="left:434.0px;top:1088.8px;font:normal 400 18px/22px 'Liberation Sans', sans-serif;color:#666666;letter-spacing:1.14px;">Lorem Ipsum</span>
<span class="t" style="left:603.1px;top:1090.5px;font:normal 400 18px/22px 'Liberation Sans', sans-serif;color:#666666;letter-spacing:0.63px;">123456789</span>
<span class="t" style="left:877.1px;top:1088.8px;font:normal 400 18px/22px 'Liberation Sans', sans-serif;color:#666666;letter-spacing:1.06px;">Lorem Ipsum</span>
<span class="t" style="left:1045.6px;top:1087.8px;font:normal 400 18px/22px 'Liberation Sans', sans-serif;color:#666666;letter-spacing:0.78px;">4 years</span>
<span class="t" style="left:1203.8px;top:1090.6px;font:normal 400 18px/22px 'Liberation Sans', sans-serif;color:#666666;letter-spacing:0.84px;">3.0</span>
<span class="t" style="left:1354.2px;top:1090.6px;font:normal 400 18px/22px 'Liberation Sans', sans-serif;color:#666666;letter-spacing:1.34px;">5.0</span>
<span class="t" style="left:1463.2px;top:1090.6px;font:normal 400 18px/22px 'Liberation Sans', sans-serif;color:#666666;letter-spacing:1.96px;">2020-04-28</span>
<span class="t" style="left:1638.1px;top:1088.8px;font:normal 400 18px/22px 'Liberation Sans', sans-serif;color:#666666;letter-spacing:0.43px;">15 days</span>
<span class="t" style="left:768.5px;top:1092.1px;font:normal 700 13.5px/17px 'Liberation Sans', sans-serif;color:#ffffff;letter-spacing:-0.18px;">Pending</span>
</div>
</main>
</body>
</html>
